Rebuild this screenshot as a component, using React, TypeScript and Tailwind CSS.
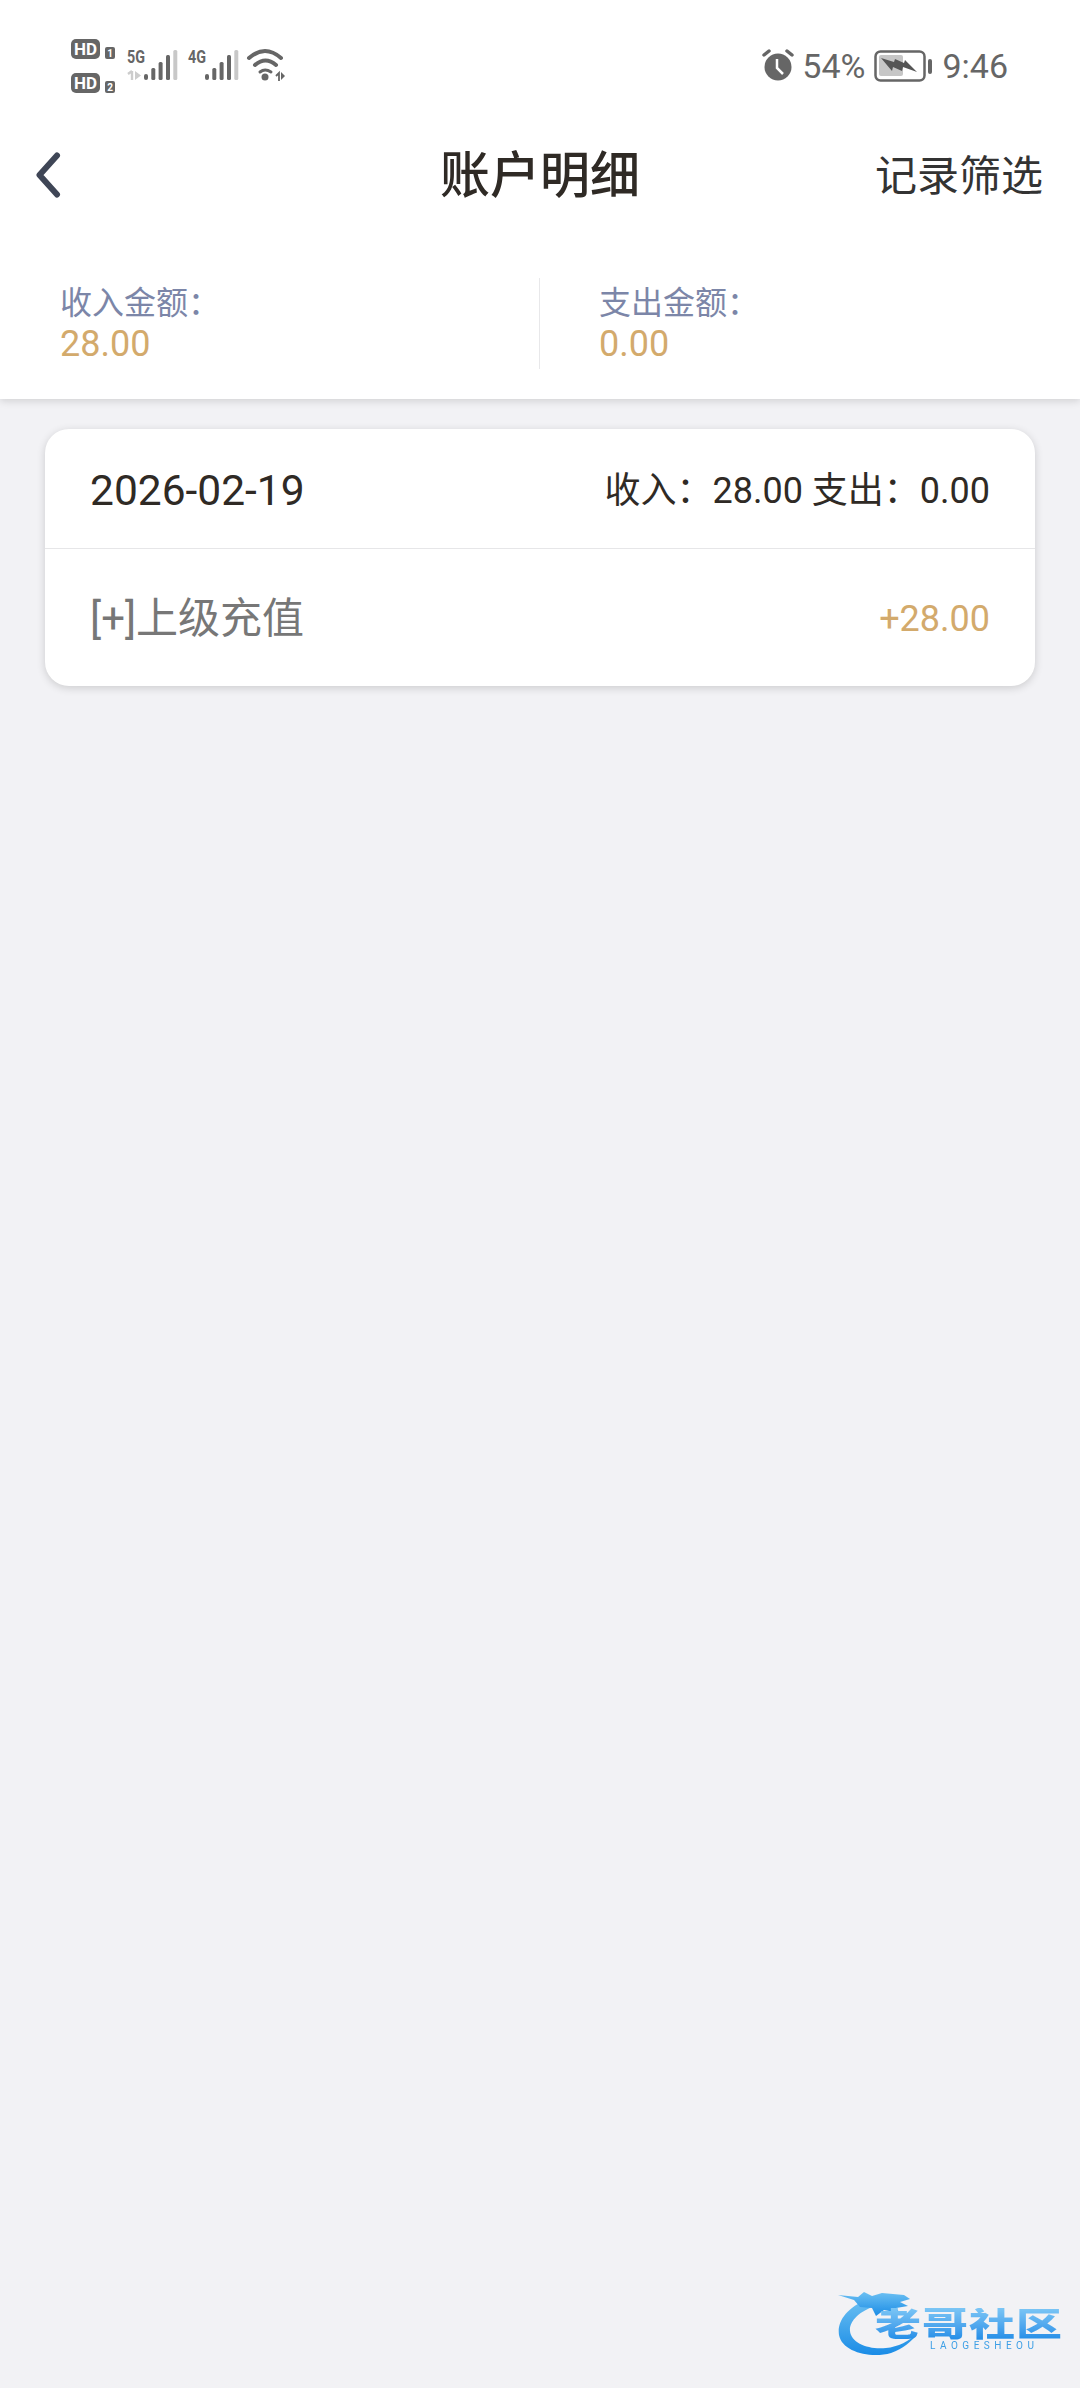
import React from 'react';

const font = { fontFamily: 'Roboto, "Noto Sans CJK SC", sans-serif' };

function SignalBars({ x }: { x: number }) {
  return (
    <g>
      <rect x={x} y={74} width={4} height={6} rx={2} fill="#666" />
      <rect x={x + 7.3} y={68} width={4} height={12} rx={1.5} fill="#666" />
      <rect x={x + 14.6} y={62} width={4} height={18} rx={1.5} fill="#666" />
      <rect x={x + 22} y={55} width={4} height={25} rx={1.5} fill="#666" />
      <rect x={x + 29.3} y={50} width={4} height={30} rx={1.5} fill="#c8c8c8" />
    </g>
  );
}

function LeftStatusIcons() {
  return (
    <svg width="230" height="70" viewBox="0 0 230 70" className="block">
      <g transform="translate(-71,-32)">
        <rect x={71} y={39} width={29} height={20} rx={5} fill="#666" />
        <text x={85.5} y={55} textAnchor="middle" fontSize={17} fontWeight={700} fill="#fff" style={font}>HD</text>
        <rect x={105} y={47} width={10} height={12} rx={2} fill="#666" />
        <text x={110} y={57} textAnchor="middle" fontSize={10} fontWeight={700} fill="#fff" style={font}>1</text>
        <rect x={71} y={73} width={29} height={20} rx={5} fill="#666" />
        <text x={85.5} y={89} textAnchor="middle" fontSize={17} fontWeight={700} fill="#fff" style={font}>HD</text>
        <rect x={105} y={81} width={10} height={12} rx={2} fill="#666" />
        <text x={110} y={91} textAnchor="middle" fontSize={10} fontWeight={700} fill="#fff" style={font}>2</text>

        <text x={127} y={63} fontSize={18} fontWeight={700} fill="#666" style={font} textLength={18} lengthAdjust="spacingAndGlyphs">5G</text>
        <path d="M132 71v9M128 74l4-3" stroke="#ccc" strokeWidth={2.4} fill="none" />
        <path d="M135 71l6 4.5-6 4.500z" fill="#ccc" />
        <SignalBars x={144} />

        <text x={188} y={63} fontSize={18} fontWeight={700} fill="#666" style={font} textLength={18} lengthAdjust="spacingAndGlyphs">4G</text>
        <SignalBars x={205} />

        <path d="M249 58Q265 44 281 58" fill="none" stroke="#666" strokeWidth={4} strokeLinecap="round" />
        <path d="M255 65Q265.500 56 276 65" fill="none" stroke="#666" strokeWidth={4} strokeLinecap="round" />
        <path d="M260 72Q265 68 271 72" fill="none" stroke="#666" strokeWidth={3} strokeLinecap="round" />
        <circle cx={265} cy={77} r={3.5} fill="#666" />
        <path d="M276 76l3-3v8" stroke="#666" strokeWidth={1.8} fill="none" />
        <path d="M281 72l4 4-4 4z" fill="#666" />
      </g>
    </svg>
  );
}

function AlarmIcon() {
  return (
    <svg width="32" height="32" viewBox="0 0 32 32" className="block">
      <circle cx="16" cy="18" r="13.5" fill="#666" />
      <path d="M15 10v9l6 6" fill="none" stroke="#fff" strokeWidth="2.5" />
      <path d="M2 6l5-4M30 6l-5-4" stroke="#666" strokeWidth="3.5" strokeLinecap="round" />
    </svg>
  );
}

function BatteryIcon() {
  return (
    <svg width="58" height="32" viewBox="0 0 58 32" className="block">
      <rect x="1.500" y="1.500" width="49" height="29" rx="5" fill="none" stroke="#666" strokeWidth="2.500" />
      <rect x="5" y="5" width="24" height="21" rx="2" fill="#c6c6c6" />
      <rect x="54" y="9" width="4" height="15" rx="2" fill="#666" />
      <path d="M7 8l13 4 1-3 9 4 1-3 12 12-14-5-1 4-9-4-1 4z" fill="#555" />
    </svg>
  );
}

function Watermark() {
  return (
    <div className="absolute left-[838px] top-[2288px] w-[226px] h-[72px] blur-[0.7px]">
      <svg width="226" height="72" viewBox="0 0 226 72" className="absolute left-0 top-0">
        <defs>
          <linearGradient id="wm" x1="0" y1="0" x2="0" y2="1">
            <stop offset="0" stopColor="#6cc0f2" />
            <stop offset="1" stopColor="#1a8ce6" />
          </linearGradient>
        </defs>
        <path d="M30 11C8 20-1 34 1 47c3 17 32 24 52 18 12-4 21-12 27-20-9 8-20 14-32 15C31 62 13 55 12 43c-1-10 10-20 25-25z" fill="url(#wm)" />
        <path d="M0 7l20 2 6-5 8 4 10-3 22 2 6 4-10 3 8 4-12 2 4 5-16-3-8 6-4-8-12-1-6-7z" fill="url(#wm)" />
      </svg>
      <div
        className="absolute left-[37px] top-[20px] whitespace-nowrap text-[46px] leading-[46px] font-black tracking-[1px] bg-gradient-to-b from-[#7cc6f5] to-[#1c8be6] bg-clip-text text-transparent"
        style={{ transform: 'scaleY(0.72)', transformOrigin: 'left top' }}
      >
        老哥社区
      </div>
      <div className="absolute left-[92px] top-[52px] whitespace-nowrap text-[10px] leading-[12px] tracking-[4.500px] text-[#3d9fe6]">
        LAOGESHEOU
      </div>
    </div>
  );
}

export default function App() {
  return (
    <div className="relative w-[1080px] h-[2388px] overflow-hidden bg-[#f2f2f5]" style={font}>
      <div className="bg-white shadow-[0_2px_8px_rgba(0,0,0,0.14)] h-[399px]">
        {/* status bar */}
        <div className="flex justify-between h-[130px] pl-[71px] pr-[72px]">
          <div className="pt-[32px]">
            <LeftStatusIcons />
          </div>
          <div className="flex items-start pt-[49px] text-[34px] leading-[34px] text-[#666]">
            <AlarmIcon />
            <span className="ml-[8px]">54%</span>
            <div className="ml-[9px] mt-[1px]">
              <BatteryIcon />
            </div>
            <span className="ml-[10px]">9:46</span>
          </div>
        </div>

        {/* nav */}
        <div className="relative flex items-center justify-center h-[92px]">
          <button className="absolute left-[35px] top-[22px]">
            <svg width="26" height="46" viewBox="0 0 26 46" className="block">
              <path d="M22 3.500L4.500 23 22 42.500" fill="none" stroke="#3f4656" strokeWidth="6" strokeLinecap="round" strokeLinejoin="round" />
            </svg>
          </button>
          <h1 className="text-[50px] leading-[60px] font-medium text-[#2f2a25]">账户明细</h1>
          <span className="absolute right-[37px] top-[22px] text-[42px] leading-[50px] text-[#333]">记录筛选</span>
        </div>

        {/* totals */}
        <div className="flex mt-[56px] h-[91px]">
          <div className="w-[540px] pl-[60px] pt-[4px] border-r border-[#e8e8ea]">
            <div className="text-[32px] leading-[42px] text-[#7c86a8]">收入金额：</div>
            <div className="text-[36px] leading-[40px] text-[#d3aa6c]">28.00</div>
          </div>
          <div className="pl-[59px] pt-[4px]">
            <div className="text-[32px] leading-[42px] text-[#7c86a8]">支出金额：</div>
            <div className="text-[36px] leading-[40px] text-[#d3aa6c]">0.00</div>
          </div>
        </div>
      </div>

      {/* record card */}
      <div className="mx-[45px] mt-[30px] rounded-[24px] bg-white shadow-[0_2px_8px_rgba(0,0,0,0.16)]">
        <div className="flex items-center justify-between h-[120px] pt-[5px] px-[45px] border-b border-[#e6e6e8] text-[#2f2a25]">
          <span className="text-[42.500px]">2026-02-19</span>
          <span className="text-[36px]">收入：28.00 支出：0.00</span>
        </div>
        <div className="flex items-center justify-between h-[137px] pt-[2px] px-[45px]">
          <span className="text-[42px] text-[#777]">[+]上级充值</span>
          <span className="text-[36px] text-[#d3aa6c]">+28.00</span>
        </div>
      </div>

      <Watermark />
    </div>
  );
}
